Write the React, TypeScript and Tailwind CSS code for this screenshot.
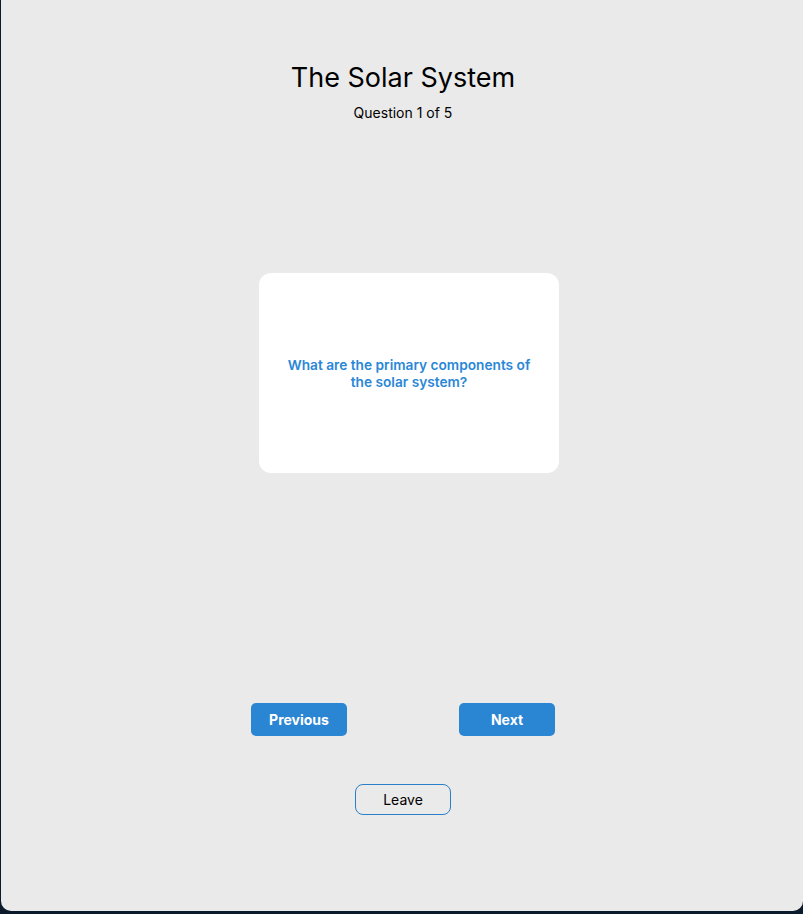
export default function App() {
  return (
    <div className="h-[914px] w-[803px] overflow-hidden bg-[#0c1b2b]" style={{ fontFamily: "Inter, 'Noto Sans', sans-serif" }}>
      <div className="ml-[1px] flex h-[911px] flex-col items-center rounded-b-[10px] bg-[#eaeaea] pl-[2px]">
        <h1 className="mt-[61px] text-[27px] leading-[34px] font-normal text-black">The Solar System</h1>
        <p className="mt-[8px] text-[14px] leading-[20px] text-black">Question 1 of 5</p>

        <div className="mt-[150px] ml-[12px] flex h-[200px] w-[300px] items-center justify-center rounded-[12px] bg-white px-6 pt-[2px]">
          <p className="text-center text-[13.7px] leading-[17px] font-semibold text-[#2a87d6]">
            What are the primary components of the solar system?
          </p>
        </div>

        <div className="mt-[230px] flex gap-[112px]">
          <button className="h-[33px] w-[96px] rounded-[5px] bg-[#2a85d3] text-[14px] font-bold text-white">Previous</button>
          <button className="h-[33px] w-[96px] rounded-[5px] bg-[#2a85d3] text-[14px] font-bold text-white">Next</button>
        </div>

        <button className="mt-[48px] h-[31px] w-[96px] rounded-[8px] border border-[#2a7fc8] text-[14px] text-black">Leave</button>
      </div>
    </div>
  );
}
